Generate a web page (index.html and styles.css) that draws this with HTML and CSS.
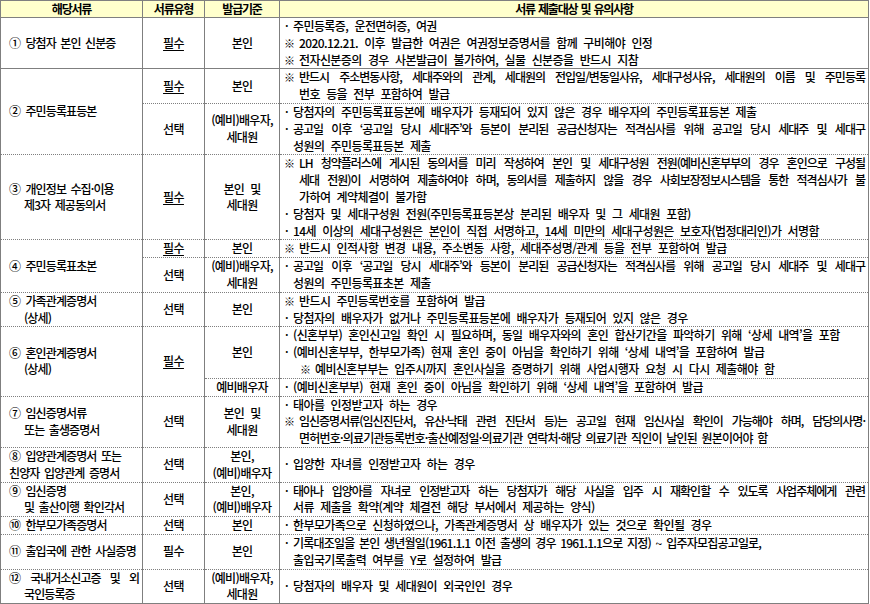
FILE: index.html
```html
<!DOCTYPE html>
<html lang="ko">
<head>
<meta charset="utf-8">
<title>서류 제출대상 및 유의사항</title>
<link rel="stylesheet" href="styles.css">
</head>
<body>
<table class="doc">
  <colgroup>
    <col class="c1"><col class="c2"><col class="c3"><col class="c4">
  </colgroup>
  <thead>
    <tr>
      <th>해당서류</th>
      <th>서류유형</th>
      <th>발급기준</th>
      <th>서류 제출대상 및 유의사항</th>
    </tr>
  </thead>
  <tbody>
    <tr class="solid-bottom">
      <td class="name"><span class="num">①</span> 당첨자 본인 신분증</td>
      <td class="type"><u>필수</u></td>
      <td class="basis">본인</td>
      <td class="notes">
        <div class="item dot"><span class="mk">·</span><span class="tx">주민등록증, 운전면허증, 여권</span></div>
        <div class="item ref"><span class="mk">※</span><span class="tx">2020.12.21. 이후 발급한 여권은 여권정보증명서를 함께 구비해야 인정</span></div>
        <div class="item ref"><span class="mk">※</span><span class="tx">전자신분증의 경우 사본발급이 불가하여, 실물 신분증을 반드시 지참</span></div>
      </td>
    </tr>
    <tr>
      <td class="name" rowspan="2"><span class="num">②</span> 주민등록표등본</td>
      <td class="type"><u>필수</u></td>
      <td class="basis">본인</td>
      <td class="notes">
        <div class="item ref"><span class="mk">※</span><span class="tx"><span class="ln">반드시 주소변동사항, 세대주와의 관계, 세대원의 전입일/변동일사유, 세대구성사유, 세대원의 이름 및 주민등록</span>번호 등을 전부 포함하여 발급</span></div>
      </td>
    </tr>
    <tr>
      <td class="type">선택</td>
      <td class="basis">(예비)배우자,<br>세대원</td>
      <td class="notes">
        <div class="item dot"><span class="mk">·</span><span class="tx">당첨자의 주민등록표등본에 배우자가 등재되어 있지 않은 경우 배우자의 주민등록표등본 제출</span></div>
        <div class="item dot"><span class="mk">·</span><span class="tx"><span class="ln">공고일 이후 ‘공고일 당시 세대주’와 등본이 분리된 공급신청자는 적격심사를 위해 공고일 당시 세대주 및 세대구</span>성원의 주민등록표등본 제출</span></div>
      </td>
    </tr>
    <tr>
      <td class="name"><span class="num">③</span> 개인정보 수집·이용<br>제3자 제공동의서</td>
      <td class="type"><u>필수</u></td>
      <td class="basis">본인 및<br>세대원</td>
      <td class="notes">
        <div class="item ref"><span class="mk">※</span><span class="tx"><span class="ln">LH 청약플러스에 게시된 동의서를 미리 작성하여 본인 및 세대구성원 전원(예비신혼부부의 경우 혼인으로 구성될</span><span class="ln">세대 전원)이 서명하여 제출하여야 하며, 동의서를 제출하지 않을 경우 사회보장정보시스템을 통한 적격심사가 불</span>가하여 계약체결이 불가함</span></div>
        <div class="item dot"><span class="mk">·</span><span class="tx">당첨자 및 세대구성원 전원(주민등록표등본상 분리된 배우자 및 그 세대원 포함)</span></div>
        <div class="item dot"><span class="mk">·</span><span class="tx">14세 이상의 세대구성원은 본인이 직접 서명하고, 14세 미만의 세대구성원은 보호자(법정대리인)가 서명함</span></div>
      </td>
    </tr>
    <tr>
      <td class="name" rowspan="2"><span class="num">④</span> 주민등록표초본</td>
      <td class="type"><u>필수</u></td>
      <td class="basis">본인</td>
      <td class="notes">
        <div class="item ref"><span class="mk">※</span><span class="tx">반드시 인적사항 변경 내용, 주소변동 사항, 세대주성명/관계 등을 전부 포함하여 발급</span></div>
      </td>
    </tr>
    <tr>
      <td class="type">선택</td>
      <td class="basis">(예비)배우자,<br>세대원</td>
      <td class="notes">
        <div class="item dot"><span class="mk">·</span><span class="tx"><span class="ln">공고일 이후 ‘공고일 당시 세대주’와 등본이 분리된 공급신청자는 적격심사를 위해 공고일 당시 세대주 및 세대구</span>성원의 주민등록표초본 제출</span></div>
      </td>
    </tr>
    <tr>
      <td class="name"><span class="num">⑤</span> 가족관계증명서<br>(상세)</td>
      <td class="type">선택</td>
      <td class="basis">본인</td>
      <td class="notes">
        <div class="item ref"><span class="mk">※</span><span class="tx">반드시 주민등록번호를 포함하여 발급</span></div>
        <div class="item dot"><span class="mk">·</span><span class="tx">당첨자의 배우자가 없거나 주민등록표등본에 배우자가 등재되어 있지 않은 경우</span></div>
      </td>
    </tr>
    <tr>
      <td class="name" rowspan="2"><span class="num">⑥</span> 혼인관계증명서<br>(상세)</td>
      <td class="type" rowspan="2"><u>필수</u></td>
      <td class="basis">본인</td>
      <td class="notes">
        <div class="item dot"><span class="mk">·</span><span class="tx">(신혼부부) 혼인신고일 확인 시 필요하며, 동일 배우자와의 혼인 합산기간을 파악하기 위해 ‘상세 내역’을 포함</span></div>
        <div class="item dot"><span class="mk">·</span><span class="tx">(예비신혼부부, 한부모가족) 현재 혼인 중이 아님을 확인하기 위해 ‘상세 내역’을 포함하여 발급</span></div>
        <div class="item ref sub"><span class="mk">※</span><span class="tx">예비신혼부부는 입주시까지 혼인사실을 증명하기 위해 사업시행자 요청 시 다시 제출해야 함</span></div>
      </td>
    </tr>
    <tr>
      <td class="basis">예비배우자</td>
      <td class="notes">
        <div class="item dot"><span class="mk">·</span><span class="tx">(예비신혼부부) 현재 혼인 중이 아님을 확인하기 위해 ‘상세 내역’을 포함하여 발급</span></div>
      </td>
    </tr>
    <tr>
      <td class="name"><span class="num">⑦</span> 임신증명서류<br>또는 출생증명서</td>
      <td class="type">선택</td>
      <td class="basis">본인 및<br>세대원</td>
      <td class="notes">
        <div class="item dot"><span class="mk">·</span><span class="tx">태아를 인정받고자 하는 경우</span></div>
        <div class="item ref"><span class="mk">※</span><span class="tx"><span class="ln">임신증명서류(임신진단서, 유산·낙태 관련 진단서 등)는 공고일 현재 임신사실 확인이 가능해야 하며, 담당의사명·</span><span class="ln2">면허번호·의료기관등록번호·출산예정일·의료기관 연락처·해당 의료기관 직인이 날인된 원본이어야 함</span></span></div>
      </td>
    </tr>
    <tr>
      <td class="name flat"><span class="num">⑧</span> 입양관계증명서 또는<br>친양자 입양관계 증명서</td>
      <td class="type">선택</td>
      <td class="basis">본인,<br>(예비)배우자</td>
      <td class="notes">
        <div class="item dot"><span class="mk">·</span><span class="tx">입양한 자녀를 인정받고자 하는 경우</span></div>
      </td>
    </tr>
    <tr>
      <td class="name"><span class="num">⑨</span> 임신증명<br>및 출산이행 확인각서</td>
      <td class="type">선택</td>
      <td class="basis">본인,<br>(예비)배우자</td>
      <td class="notes">
        <div class="item dot"><span class="mk">·</span><span class="tx"><span class="ln">태아나 입양아를 자녀로 인정받고자 하는 당첨자가 해당 사실을 입주 시 재확인할 수 있도록 사업주체에게 관련</span>서류 제출을 확약(계약 체결전 해당 부서에서 제공하는 양식)</span></div>
      </td>
    </tr>
    <tr>
      <td class="name"><span class="num">⑩</span> 한부모가족증명서</td>
      <td class="type">선택</td>
      <td class="basis">본인</td>
      <td class="notes">
        <div class="item dot"><span class="mk">·</span><span class="tx">한부모가족으로 신청하였으나, 가족관계증명서 상 배우자가 있는 것으로 확인될 경우</span></div>
      </td>
    </tr>
    <tr>
      <td class="name"><span class="num">⑪</span> 출입국에 관한 사실증명</td>
      <td class="type">필수</td>
      <td class="basis">본인</td>
      <td class="notes">
        <div class="item dot"><span class="mk">·</span><span class="tx"><span class="ln2">기록대조일을 본인 생년월일(1961.1.1 이전 출생의 경우 1961.1.1으로 지정) ~ 입주자모집공고일로,</span>출입국기록출력 여부를 Y로 설정하여 발급</span></div>
      </td>
    </tr>
    <tr>
      <td class="name"><span class="ln"><span class="num">⑫</span> 국내거소신고증 및 외</span>국인등록증</td>
      <td class="type">선택</td>
      <td class="basis">(예비)배우자,<br>세대원</td>
      <td class="notes">
        <div class="item dot"><span class="mk">·</span><span class="tx">당첨자의 배우자 및 세대원이 외국인인 경우</span></div>
      </td>
    </tr>
  </tbody>
</table>
</body>
</html>
```

FILE: styles.css
```css
html, body {
  margin: 0;
  padding: 0;
  background: #ffffff;
}

body {
  font-family: "Noto Sans CJK KR", "Noto Sans", sans-serif;
  font-size: 12px;
  font-weight: 500;
  letter-spacing: -0.6px;
  word-spacing: 3.5px;
  color: #000000;
}

.doc {
  border-collapse: collapse;
  table-layout: fixed;
  width: 869px;
  border: 1px solid #7f7f7f;
}

.c1 { width: 142px; }
.c2 { width: 62px; }
.c3 { width: 75px; }
.c4 { width: auto; }

.doc th {
  height: 16px;
  padding: 0;
  background: #ffffcc;
  border: 1px solid #7f7f7f;
  font-weight: 700;
  line-height: 16px;
  text-align: center;
  letter-spacing: -1.2px;
  word-spacing: 1px;
}

.doc td {
  padding: 0;
  border-top: 1px dotted #7f7f7f;
  border-bottom: 1px dotted #7f7f7f;
  border-left: 1px solid #7f7f7f;
  border-right: 1px solid #7f7f7f;
  line-height: 16.8px;
  vertical-align: middle;
}

.solid-bottom td {
  border-bottom: 1px solid #7f7f7f;
}

.name {
  padding: 0 3px 0 23px !important;
  text-indent: -15px;
  text-align: justify;
  white-space: nowrap;
  letter-spacing: -0.9px;
  word-spacing: 2px;
}

.name.flat {
  padding-left: 8px !important;
  text-indent: 0;
}

.num {
  display: inline-block;
  width: 12px;
  text-indent: 0;
  letter-spacing: 0;
}

.type,
.basis {
  text-align: center;
  white-space: nowrap;
}

.basis {
  letter-spacing: -0.7px;
}

.type u {
  text-underline-offset: 2px;
}

.notes {
  padding: 0 3px 0 4px !important;
}

.item {
  display: flex;
}

.item .mk {
  flex: none;
  letter-spacing: 0;
}

.item.dot .mk {
  width: 9px;
  padding-left: 1px;
  box-sizing: border-box;
}

.item.ref .mk {
  width: 15px;
  font-size: 11px;
}

.item.ref.sub {
  padding-left: 16px;
}

.item .tx {
  flex: 1;
  min-width: 0;
}

.ln {
  display: block;
  white-space: nowrap;
  letter-spacing: -1px;
  word-spacing: 0;
  text-align: justify;
  text-align-last: justify;
}

.ln2 {
  display: block;
  white-space: nowrap;
  letter-spacing: -0.8px;
  word-spacing: 2px;
}
```
